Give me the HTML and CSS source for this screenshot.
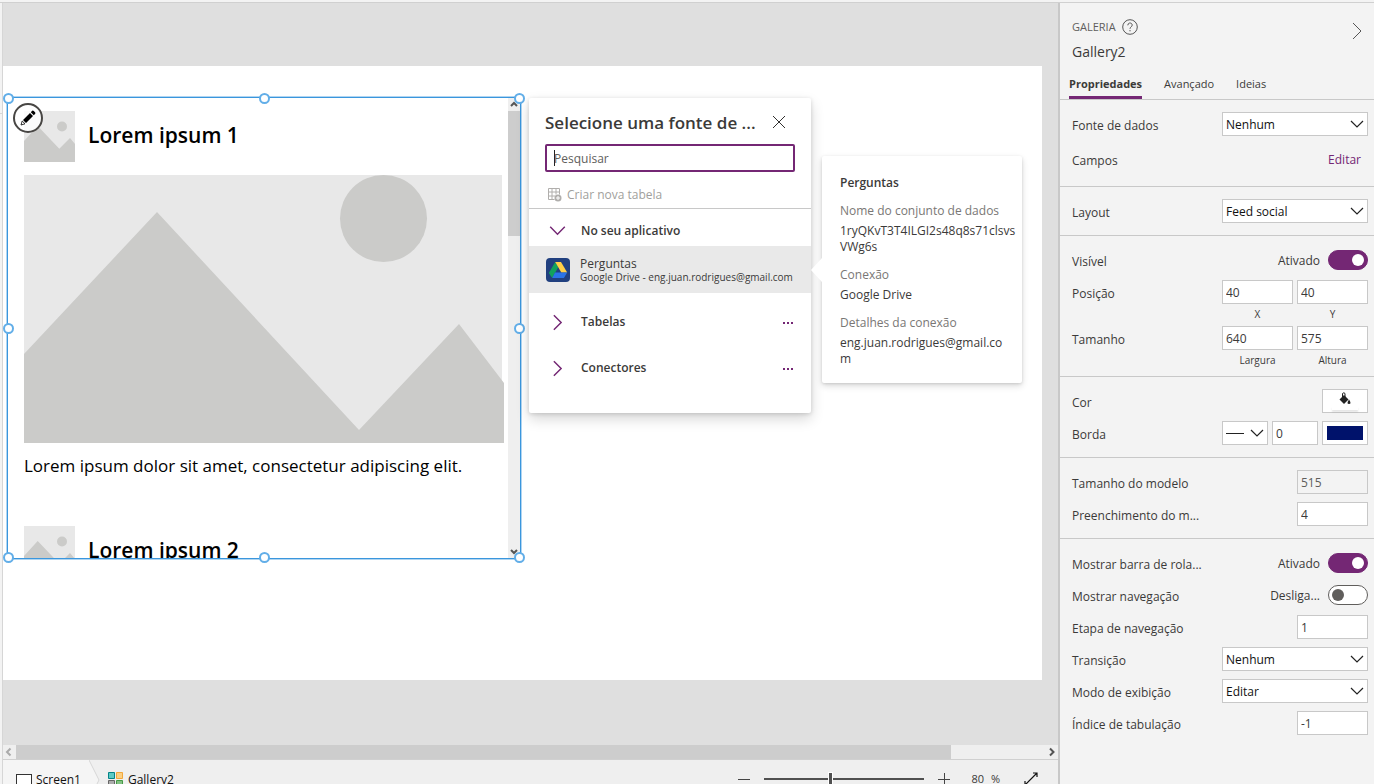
FILE: index.html
```html
<!DOCTYPE html>
<html lang="pt-BR">
<head>
  <meta charset="UTF-8" />
  <meta name="viewport" content="width=device-width, initial-scale=1.0"/>
  <title>Gallery2</title>
  <link rel="stylesheet" href="styles.css">
</head>
<body>
  <svg class="defs" aria-hidden="true">
    <symbol id="chevron" viewBox="0 0 14 14"><path d="M1 4l6 6 6-6" fill="none" stroke="currentColor" stroke-width="1.2"/></symbol>
    <symbol id="thumb" viewBox="0 0 51 51">
      <rect width="51" height="51" fill="#e8e8e8"/>
      <g fill="#cbcbc9"><circle cx="38" cy="15.500" r="5"/><path d="M0 30L13.700 15 35.300 37.700 46 27l5 6v18H0z"/></g>
    </symbol>
  </svg>

  <div class="topbar"></div>
  <div class="app">
    <div class="rail"><div class="rail-tab"></div></div>

    <main class="editor">
      <div class="stage">
        <div class="screen">

          <div class="gallery">
            <div class="gallery-view">
              <div class="items">
                <article class="item">
                  <div class="item-head">
                    <svg class="item-thumb"><use href="#thumb"/></svg>
                    <h2>Lorem ipsum 1</h2>
                  </div>
                  <svg class="item-image" viewBox="0 0 480 268">
                    <rect width="478" height="268" fill="#e8e8e8"/>
                    <g fill="#cbcbc9"><circle cx="359.500" cy="43.500" r="43.500"/><path d="M0 179L133 37l202 218 100-106 45 59v60H0z"/></g>
                  </svg>
                  <p>Lorem ipsum dolor sit amet, consectetur adipiscing elit.</p>
                </article>
                <article class="item">
                  <div class="item-head">
                    <svg class="item-thumb"><use href="#thumb"/></svg>
                    <h2>Lorem ipsum 2</h2>
                  </div>
                </article>
              </div>
              <div class="vscroll">
                <svg viewBox="0 0 12 13"><path d="M3 8l3-3 3 3" fill="none" stroke="#555" stroke-width="2"/></svg>
                <div class="vscroll-thumb"></div>
                <svg viewBox="0 0 12 13"><path d="M3 5l3 3 3-3" fill="none" stroke="#555" stroke-width="2"/></svg>
              </div>
            </div>
            <span class="handle top left"></span>
            <span class="handle top center"></span>
            <span class="handle top right"></span>
            <span class="handle middle left"></span>
            <span class="handle middle right"></span>
            <span class="handle bottom left"></span>
            <span class="handle bottom center"></span>
            <span class="handle bottom right"></span>
            <button class="edit" aria-label="Editar galeria">
              <svg width="16" height="16" viewBox="0 0 16 16"><path d="M1 15l1.200-4 2.800 2.800z" fill="#fff" stroke="#000" stroke-width=".8"/><path d="M3 10l7-7 3 3-7 7zM10.800 2.200l1.400-1.400q.8-.6 1.600.2l1.200 1.200q.8.8.2 1.600l-1.400 1.400z"/></svg>
            </button>
          </div>

          <section class="picker" aria-label="Fonte de dados">
            <div class="picker-head">
              <h3>Selecione uma fonte de ...</h3>
              <button class="close" aria-label="Fechar"><svg width="14" height="14" viewBox="0 0 14 14"><path d="M1 1l12 12M13 1L1 13" stroke="#323130"/></svg></button>
            </div>
            <input class="search" type="text" placeholder="Pesquisar" aria-label="Pesquisar">
            <button class="create" disabled>
              <svg width="14" height="14" viewBox="0 0 14 14" fill="none" stroke="#b0aeac"><path d="M.5.5h11v6M.5.5v11h6M.5 4h11M.5 8h7M4 .5v11M8 .5v6"/><circle cx="10" cy="10" r="3.500" fill="#b0aeac" stroke="none"/><path d="M10 8v4M8 10h4" stroke="#fff"/></svg>
              Criar nova tabela
            </button>
            <button class="group open"><svg class="arrow"><use href="#chevron"/></svg><span>No seu aplicativo</span></button>
            <button class="source">
              <svg width="24" height="24" viewBox="0 0 24 24">
                <rect width="24" height="24" rx="4" fill="#21407f"/>
                <path d="M9.200 4l3 5.200-6 10.800-3.400-5z" fill="#12a15c"/>
                <path d="M9.200 4h5.800l6.200 10.600h-5.900z" fill="#ffcf48"/>
                <path d="M9 14.600h12.200L17.900 20H6.200z" fill="#2a73e8"/>
              </svg>
              <span>
                <b>Perguntas</b>
                <small>Google Drive - eng.juan.rodrigues@gmail.com</small>
              </span>
            </button>
            <div class="group-row">
              <button class="group"><svg class="arrow"><use href="#chevron"/></svg><span>Tabelas</span></button>
              <button class="more" aria-label="Mais"><svg width="10" height="2"><path d="M0 0h2v2H0zM4 0h2v2H4zM8 0h2v2H8z" fill="#742774"/></svg></button>
            </div>
            <div class="group-row">
              <button class="group"><svg class="arrow"><use href="#chevron"/></svg><span>Conectores</span></button>
              <button class="more" aria-label="Mais"><svg width="10" height="2"><path d="M0 0h2v2H0zM4 0h2v2H4zM8 0h2v2H8z" fill="#742774"/></svg></button>
            </div>
          </section>

          <aside class="callout">
            <h4>Perguntas</h4>
            <dl>
              <dt>Nome do conjunto de dados</dt>
              <dd>1ryQKvT3T4ILGI2s48q8s71clsvs<br>VWg6s</dd>
              <dt>Conexão</dt>
              <dd>Google Drive</dd>
              <dt>Detalhes da conexão</dt>
              <dd>eng.juan.rodrigues@gmail.co<br>m</dd>
            </dl>
          </aside>
        </div>
      </div>

      <div class="hscroll">
        <svg width="13" height="14" viewBox="0 0 13 14"><path d="M7.500 3.500L4 7l3.500 3.500" fill="none" stroke="#aaa" stroke-width="2"/></svg>
        <div class="hscroll-thumb"></div>
        <svg width="13" height="14" viewBox="0 0 13 14"><path d="M5 3.500L8.500 7 5 10.500" fill="none" stroke="#555" stroke-width="2"/></svg>
      </div>

      <footer class="statusbar">
        <nav class="crumbs">
          <a href="#"><svg width="16" height="16" viewBox="0 0 16 16"><rect x=".5" y="2.500" width="15" height="12" fill="#fff" stroke="#333"/></svg>Screen1</a>
          <svg class="crumb-sep" width="11" height="40" viewBox="0 0 11 40"><path d="M0 0l10 20L0 40z" fill="#f5f5f5"/><path d="M0 0l10 20L0 40" fill="none" stroke="#d6d6d6"/></svg>
          <a href="#"><svg width="16" height="16" viewBox="0 0 16 16"><path d="M.5.500h6v6h-6z" fill="#5cc9c4" stroke="#038387"/><path d="M8.500.500h6v6h-6z" fill="#fbcf81" stroke="#f2a73b"/><path d="M.5 8.500h6v6h-6z" fill="#acacac" stroke="#666"/><path d="M8.500 8.500h6v6h-6z" fill="#84c184" stroke="#449a44"/></svg>Gallery2</a>
        </nav>
        <div class="zoom">
          <button aria-label="Reduzir"><svg width="12" height="12"><path d="M0 6.500h12" stroke="#444"/></svg></button>
          <input type="range" min="10" max="185" value="82" aria-label="Zoom">
          <button aria-label="Ampliar"><svg width="12" height="12"><path d="M0 6.500h12M6.500 0v12" stroke="#444"/></svg></button>
          <span class="zoom-value">80 <i>%</i></span>
          <button aria-label="Ajustar"><svg width="14" height="14" viewBox="0 0 14 14" fill="none" stroke="#111" stroke-width="1.200"><path d="M1 13L13 1M9 1h4v4M1 9v4h4"/></svg></button>
        </div>
      </footer>
    </main>

    <aside class="panel">
      <header>
        <div class="panel-title">
          <div class="kind">GALERIA
            <svg width="16" height="16" viewBox="0 0 16 16" fill="none" stroke="#555"><circle cx="8" cy="8" r="7.300"/><path d="M5.800 6.300c0-3 4.400-3 4.400-.2C10.200 7.800 8 7.900 8 9.800"/><path d="M8 11v1.300"/></svg>
          </div>
          <div class="name">Gallery2</div>
        </div>
        <button class="collapse" aria-label="Recolher"><svg width="10" height="18" viewBox="0 0 10 18"><path d="M1 1l8 8-8 8" fill="none" stroke="#555"/></svg></button>
      </header>

      <div class="tabs" role="tablist">
        <button role="tab" aria-selected="true">Propriedades</button>
        <button role="tab">Avançado</button>
        <button role="tab">Ideias</button>
      </div>

      <section>
        <div class="row">
          <label for="fonte">Fonte de dados</label>
          <span class="select"><select id="fonte"><option>Nenhum</option></select><svg><use href="#chevron"/></svg></span>
        </div>
        <div class="row tall">
          <span class="label">Campos</span>
          <a class="link" href="#">Editar</a>
        </div>
      </section>

      <section>
        <div class="row">
          <label for="layout">Layout</label>
          <span class="select"><select id="layout"><option>Feed social</option></select><svg><use href="#chevron"/></svg></span>
        </div>
      </section>

      <section>
        <div class="row">
          <label for="visivel">Visível</label>
          <span class="state">Ativado</span>
          <input class="toggle" id="visivel" type="checkbox" checked>
        </div>
        <div class="row">
          <span class="label">Posição</span>
          <input id="x" type="text" value="40">
          <input id="y" type="text" value="40">
        </div>
        <div class="hints"><label for="x">X</label><label for="y">Y</label></div>
        <div class="row">
          <span class="label">Tamanho</span>
          <input id="largura" type="text" value="640">
          <input id="altura" type="text" value="575">
        </div>
        <div class="hints"><label for="largura">Largura</label><label for="altura">Altura</label></div>
      </section>

      <section>
        <div class="row">
          <label for="cor">Cor</label>
          <button class="swatch" id="cor">
            <svg width="14" height="14" viewBox="0 0 14 14"><path d="M1.500 7.500L6 3l4.500 4.500L6 12z" fill="#222"/><path d="M4.500 5.500v-4q1.500-1.500 2.500 0v4" fill="none" stroke="#222"/><path d="M11 7.500q3 4.500 0 4.500t0-4.500z" fill="#222"/></svg>
            <span class="paint none"></span>
          </button>
        </div>
        <div class="row">
          <label for="borda">Borda</label>
          <span class="select small"><svg class="line"><path d="M0 7.500h18" stroke="#222"/></svg><select id="borda"><option value="solid"></option></select><svg><use href="#chevron"/></svg></span>
          <input class="small" type="text" value="0" aria-label="Espessura da borda">
          <button class="swatch" aria-label="Cor da borda"><span class="paint navy"></span></button>
        </div>
      </section>

      <section>
        <div class="row">
          <label for="modelo">Tamanho do modelo</label>
          <input id="modelo" type="text" value="515" disabled>
        </div>
        <div class="row">
          <label for="preench">Preenchimento do m...</label>
          <input id="preench" type="text" value="4">
        </div>
      </section>

      <section>
        <div class="row">
          <label for="barra">Mostrar barra de rola...</label>
          <span class="state">Ativado</span>
          <input class="toggle" id="barra" type="checkbox" checked>
        </div>
        <div class="row">
          <label for="nav">Mostrar navegação</label>
          <span class="state">Desliga...</span>
          <input class="toggle" id="nav" type="checkbox">
        </div>
        <div class="row">
          <label for="etapa">Etapa de navegação</label>
          <input id="etapa" type="text" value="1">
        </div>
        <div class="row">
          <label for="transicao">Transição</label>
          <span class="select"><select id="transicao"><option>Nenhum</option></select><svg><use href="#chevron"/></svg></span>
        </div>
        <div class="row">
          <label for="modo">Modo de exibição</label>
          <span class="select"><select id="modo"><option>Editar</option></select><svg><use href="#chevron"/></svg></span>
        </div>
        <div class="row">
          <label for="indice">Índice de tabulação</label>
          <input id="indice" type="text" value="-1">
        </div>
      </section>
    </aside>
  </div>
</body>
</html>
```
FILE: styles.css
```css
:root {
  --roxo: #742774;
  --azul: #3a96dd;
  --texto: #3b3a39;
  --linha: #c8c8c8;
  --fundo: #f3f3f3;
}

* {
  box-sizing: border-box;
}

body {
  margin: 0;
  height: 100vh;
  display: flex;
  flex-direction: column;
  overflow: hidden;
  font-family: "Open Sans", "Noto Sans", sans-serif;
  font-size: 12px;
  line-height: 16px;
  color: var(--texto);
  background: var(--fundo);
}

button, input, select {
  font: inherit;
  color: inherit;
}

button {
  padding: 0;
  border: none;
  background: none;
  text-align: left;
  cursor: pointer;
}

svg {
  display: block;
  flex: none;
}

h2, h3, h4, p, dl, dd {
  margin: 0;
}

.defs {
  position: absolute;
  width: 0;
  height: 0;
}

.topbar {
  height: 3px;
  flex: none;
  border-bottom: 1px solid #d0d0d0;
}

.app {
  flex: 1;
  min-height: 0;
  display: flex;
}

.rail {
  width: 3px;
  border-right: 1px solid #d6d6d6;
}

.rail-tab {
  height: 111px;
  border-bottom: 1px solid #d6d6d6;
}

.editor {
  flex: 1;
  min-width: 0;
  display: flex;
  flex-direction: column;
}

.stage {
  flex: 1;
  min-height: 0;
  display: flex;
  padding: 63px 16px 65px 0;
  background: #dfdfdf;
}

.screen {
  flex: 1;
  position: relative;
  background: #fff;
}

/* gallery on the canvas */
.gallery {
  position: absolute;
  left: 4px;
  top: 31px;
  width: 514px;
  height: 462px;
  border: 1px solid var(--azul);
  outline: 1px solid rgba(58, 150, 221, 0.4);
}

.gallery-view {
  height: 100%;
  display: flex;
  overflow: hidden;
}

.items {
  flex: 1;
  padding: 13px 4px 0 16px;
}

.item {
  height: 415px;
}

.item-head {
  display: flex;
  align-items: center;
  gap: 13px;
  margin-bottom: 13px;
}

.item-thumb {
  width: 51px;
  height: 51px;
}

.item h2 {
  padding-bottom: 4px;
  font-size: 21px;
  line-height: 28px;
  font-weight: 600;
  color: #000;
}

.item-image {
  width: 100%;
}

.item p {
  margin-top: 11px;
  font-size: 17px;
  line-height: 24px;
  color: #000;
  white-space: nowrap;
}

.vscroll {
  width: 12px;
  display: flex;
  flex-direction: column;
  background: #efefef;
}

.vscroll-thumb {
  height: 125px;
  margin-bottom: auto;
  background: #cdcdcd;
}

.handle {
  position: absolute;
  width: 11px;
  height: 11px;
  border: 2px solid #62aee8;
  border-radius: 50%;
  background: #fff;
}

.handle.top { top: -5px; }
.handle.middle { top: calc(50% - 5px); }
.handle.bottom { bottom: -5px; }
.handle.left { left: -5px; }
.handle.center { left: calc(50% - 5px); }
.handle.right { right: -5px; }

.edit {
  position: absolute;
  left: 5px;
  top: 5px;
  width: 30px;
  height: 30px;
  display: grid;
  place-items: center;
  border: 2px solid #484644;
  border-radius: 50%;
  background: rgba(255, 255, 255, 0.8);
}

/* data source picker */
.picker {
  position: absolute;
  left: 526px;
  top: 32px;
  width: 282px;
  height: 315px;
  display: flex;
  flex-direction: column;
  background: #fff;
  border-radius: 2px;
  box-shadow: 0 6px 14px rgba(0, 0, 0, 0.16), 0 1px 4px rgba(0, 0, 0, 0.14);
}

.picker-head {
  display: flex;
  justify-content: space-between;
  align-items: center;
  padding: 12px 25px 10px 16px;
}

.picker-head h3 {
  padding-top: 2px;
  font-size: 17px;
  line-height: 22px;
  font-weight: 600;
  white-space: nowrap;
}

.search {
  margin: 0 16px;
  height: 28px;
  padding: 0 7px;
  border: 2px solid var(--roxo);
  border-radius: 2px;
  outline: none;
  background: #fff linear-gradient(#222, #222) 7px center / 1px 16px no-repeat;
}

.search::placeholder {
  color: #605e5c;
}

.create {
  height: 37px;
  display: flex;
  align-items: center;
  gap: 5px;
  padding: 10px 19px 0;
  border-bottom: 1px solid var(--linha);
  color: #a19f9d;
}

.group {
  flex: 1;
  display: flex;
  align-items: center;
  gap: 15px;
  padding-left: 20px;
  font-weight: 600;
}

.group.open {
  flex: none;
  height: 37px;
  padding-top: 6px;
}

.arrow {
  width: 17px;
  height: 17px;
  color: var(--roxo);
  transform: rotate(-90deg);
}

.group.open .arrow {
  transform: none;
}

.source {
  height: 47px;
  display: flex;
  align-items: center;
  gap: 10px;
  padding-left: 17px;
  margin-bottom: 6px;
  background: #e9e9e9;
}

.source b, .source small {
  display: block;
  font-weight: 400;
  line-height: 14px;
}

.source b {
  padding-top: 2px;
}

.source small {
  font-size: 10px;
  line-height: 13px;
}

.group-row {
  height: 46px;
  display: flex;
}

.more {
  padding: 2px 18px 0;
}

/* details of the selected source */
.callout {
  position: absolute;
  left: 819px;
  top: 90px;
  width: 200px;
  padding: 19px 4px 16px 18px;
  background: #fff;
  border-radius: 2px;
  box-shadow: 0 3px 7px rgba(0, 0, 0, 0.14), 0 1px 3px rgba(0, 0, 0, 0.12);
}

.callout::before {
  content: "";
  position: absolute;
  left: -11px;
  top: 102px;
  width: 11px;
  height: 24px;
  background: #fff;
  clip-path: polygon(0 50%, 100% 0, 100% 100%);
}

.callout h4 {
  font-size: 12px;
  font-weight: 600;
}

.callout dt {
  margin-top: 12px;
  color: #797775;
}

.callout dd {
  margin-top: 4px;
}

/* bottom of the editor */
.hscroll {
  height: 15px;
  display: flex;
  justify-content: space-between;
  background: #efefef;
  border-bottom: 1px solid #d0d0d0;
}

.hscroll-thumb {
  width: calc(100% - 120px);
  margin-right: auto;
  background: #cdcdcd;
}

.statusbar {
  height: 24px;
  display: flex;
  justify-content: space-between;
  overflow: hidden;
  background: #efefef;
}

.crumbs, .zoom {
  height: 38px;
  display: flex;
  align-items: center;
}

.crumbs {
  height: 40px;
}

.crumbs a {
  display: flex;
  align-items: center;
  gap: 4px;
  height: 40px;
  padding: 0 8px;
  color: #111;
  text-decoration: none;
}

.crumbs a:first-child {
  padding-left: 13px;
  background: #f5f5f5;
}

.zoom {
  gap: 14px;
  padding-right: 20px;
}

.zoom input {
  appearance: none;
  width: 160px;
  height: 16px;
  margin: 0;
  background: linear-gradient(#505050, #505050) center / 100% 2px no-repeat;
}

.zoom input::-webkit-slider-thumb {
  appearance: none;
  width: 5px;
  height: 14px;
  border: 1px solid #fff;
  background: #505050;
}

.zoom-value {
  margin: 0 10px 0 7px;
  font-size: 11px;
}

.zoom-value i {
  margin-left: 4px;
  font-style: normal;
}

/* properties panel */
.panel {
  width: 316px;
  flex: none;
  border-left: 2px solid var(--linha);
  background: var(--fundo);
}

.panel header {
  display: flex;
  justify-content: space-between;
  padding: 14px 12px 0 12px;
}

.kind {
  display: flex;
  align-items: center;
  gap: 6px;
  height: 20px;
  font-size: 11px;
  color: #605e5c;
}

.name {
  margin-top: 5px;
  font-size: 14px;
  line-height: 20px;
}

.collapse {
  height: 28px;
}

.tabs {
  height: 38px;
  display: flex;
  gap: 22px;
  padding-left: 9px;
  border-bottom: 1px solid var(--linha);
}

.tabs button {
  padding-top: 10px;
  border-bottom: 3px solid transparent;
  font-size: 11px;
}

.tabs button[aria-selected="true"] {
  border-color: var(--roxo);
  font-weight: 700;
}

.panel section {
  padding: 8px 6px 8px 12px;
  border-bottom: 1px solid var(--linha);
}

.panel section:last-child {
  border-bottom: none;
}

.row {
  height: 32px;
  display: flex;
  align-items: center;
  gap: 4px;
}

.row.tall {
  height: 38px;
}

.row label, .label {
  flex: 1;
  padding-top: 4px;
  white-space: nowrap;
}

.row input[type="text"] {
  width: 71px;
  height: 24px;
  padding: 0 3px;
  border: 1px solid var(--linha);
  background: #fff;
}

.row input.small {
  width: 46px;
}

.row input:disabled {
  color: #605e5c;
  background: var(--fundo);
}

.select {
  width: 146px;
  display: grid;
  align-items: center;
}

.select > * {
  grid-area: 1 / 1;
}

.select select {
  appearance: none;
  height: 24px;
  padding: 2px 3px 0;
  border: 1px solid var(--linha);
  border-radius: 0;
  background: #fff;
  color: #111;
}

.select svg {
  z-index: 1;
  width: 14px;
  height: 14px;
  margin-right: 4px;
  justify-self: end;
  color: #222;
  pointer-events: none;
}

.select .line {
  width: 18px;
  margin-left: 4px;
  justify-self: start;
}

.select.small {
  width: 46px;
}

.link {
  margin-right: 7px;
  padding-top: 2px;
  color: var(--roxo);
  text-decoration: none;
}

.state {
  margin-right: 4px;
  padding-top: 2px;
}

.toggle {
  appearance: none;
  width: 40px;
  height: 20px;
  margin: 0;
  padding: 3px;
  border: 1px solid #605e5c;
  border-radius: 10px;
  background: #fff;
}

.toggle::before {
  content: "";
  display: block;
  width: 12px;
  height: 12px;
  border-radius: 50%;
  background: #605e5c;
}

.toggle:checked {
  border-color: var(--roxo);
  background: var(--roxo);
}

.toggle:checked::before {
  margin-left: auto;
  background: #fff;
}

.hints {
  height: 14px;
  display: flex;
  justify-content: flex-end;
  gap: 4px;
  font-size: 10px;
  line-height: 12px;
}

.hints label {
  width: 71px;
  text-align: center;
}

.swatch {
  width: 46px;
  height: 24px;
  display: flex;
  flex-direction: column;
  align-items: center;
  justify-content: center;
  border: 1px solid var(--linha);
  background: #fff;
}

.paint {
  width: 36px;
  height: 14px;
}

.paint.navy {
  background: #00126b;
}

.paint.none {
  width: 26px;
  height: 4px;
  box-shadow: 0 2px 2px rgba(0, 0, 0, 0.1);
}
```
